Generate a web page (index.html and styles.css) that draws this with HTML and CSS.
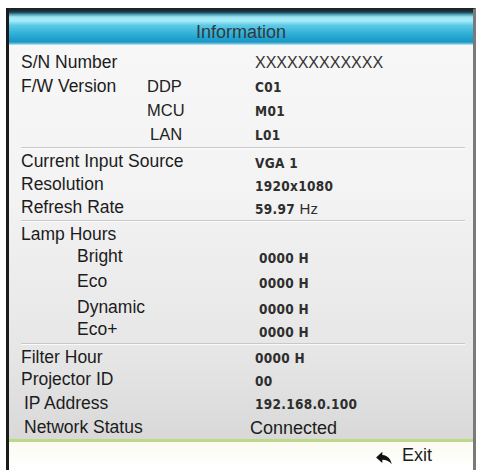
FILE: index.html
```html
<!DOCTYPE html>
<html>
<head>
<meta charset="utf-8">
<link rel="stylesheet" href="styles.css">
</head>
<body>
<div class="frame">
  <div class="header">Information</div>
  <div class="body">
    <div class="section s1">
      <div class="row"><span class="label">S/N Number</span><span class="sub"></span><span class="val thin">XXXXXXXXXXXX</span></div>
      <div class="row"><span class="label">F/W Version</span><span class="sub">DDP</span><span class="val">C01</span></div>
      <div class="row"><span class="label"></span><span class="sub">MCU</span><span class="val">M01</span></div>
      <div class="row"><span class="label"></span><span class="sub lan">LAN</span><span class="val">L01</span></div>
    </div>
    <div class="sep"></div>
    <div class="section s2">
      <div class="row r23"><span class="label wide">Current Input Source</span><span class="val">VGA 1</span></div>
      <div class="row r23"><span class="label wide">Resolution</span><span class="val">1920x1080</span></div>
      <div class="row r23"><span class="label wide">Refresh Rate</span><span class="val">59.97 <span class="unit">Hz</span></span></div>
    </div>
    <div class="sep"></div>
    <div class="section s3">
      <div class="row r22"><span class="label wide">Lamp Hours</span></div>
      <div class="row r22"><span class="label lamp">Bright</span><span class="val lv">0000 H</span></div>
      <div class="row r28"><span class="label lamp">Eco</span><span class="val lv">0000 H</span></div>
      <div class="row r24"><span class="label lamp">Dynamic</span><span class="val lv">0000 H</span></div>
      <div class="row r21"><span class="label lamp">Eco+</span><span class="val lv">0000 H</span></div>
    </div>
    <div class="sep"></div>
    <div class="section s4">
      <div class="row r22"><span class="label wide">Filter Hour</span><span class="val">0000 H</span></div>
      <div class="row r23"><span class="label wide">Projector ID</span><span class="val">00</span></div>
      <div class="row r24"><span class="label wide ind">IP Address</span><span class="val">192.168.0.100</span></div>
      <div class="row r24"><span class="label wide ind">Network Status</span><span class="conn">Connected</span></div>
    </div>
  </div>
  <div class="footer">
    <span class="exit">
      <svg class="exit-icon" viewBox="0 0 24 24" width="20" height="20"><path d="M10 8.5V4.5L2.5 11.5 10 18V14c5 0 8.8 1.8 11.2 5.6C20.4 14 17 9.2 10 8.5z" fill="#111"/></svg>
      <span class="exit-text">Exit</span>
    </span>
  </div>
</div>
</body>
</html>
```
FILE: styles.css
```css
html, body {
  margin: 0;
  padding: 0;
  background: #ffffff;
}
body {
  width: 481px;
  height: 470px;
  overflow: hidden;
  font-family: "Liberation Sans", Arial, sans-serif;
  color: #1c1c1c;
}
.frame {
  margin: 8px 0 0 6px;
  width: 464px;
  height: 461px;
  border-left: 3px solid #1a1a1a;
  border-right: 3px solid #7a7a7a;
  border-top: 1px solid #222;
  display: flex;
  flex-direction: column;
  background: linear-gradient(#f8f8f8 0%, #f3f3f3 40%, #e6e6e6 75%, #d8d8d8 94%);
}
.header {
  height: 24px;
  padding-top: 12px;
  line-height: 22px;
  text-align: center;
  font-size: 18px;
  color: #33393c;
  background: linear-gradient(#18222a 0px, #1e3a46 3px, #3d8ea6 5px, #9fe6f6 8px, #a6ecf8 12px, #62cbe6 16px, #3cb8dc 22px, #1e9fcc 30px, #1a98c6 33px, #7fc7e0 35px, #d8eef4 36px);
  flex: none;
}
.body {
  flex: none;
  padding-top: 5px;
}
.section {
  padding: 0 0 0 12px;
}
.row {
  display: flex;
  align-items: center;
  height: 24px;
}
.r21 { height: 21px; }
.r22 { height: 22px; }
.r23 { height: 23px; }
.r24 { height: 24px; }
.r28 { height: 28px; }
.label {
  width: 126px;
  font-size: 17.5px;
  white-space: nowrap;
  flex: none;
}
.label.wide {
  width: 234px;
}
.label.ind {
  padding-left: 3px;
  width: 231px;
}
.label.lamp {
  padding-left: 56px;
  width: 180px;
}
.sub {
  width: 108px;
  font-size: 16.5px;
  color: #222;
  flex: none;
}
.sub.lan {
  padding-left: 3px;
  width: 105px;
}
.val {
  font-family: "DejaVu Sans Condensed", "DejaVu Sans", sans-serif;
  font-stretch: condensed;
  font-size: 13.5px;
  font-weight: 700;
  letter-spacing: 0.3px;
  color: #2e2e2e;
  padding-top: 2px;
}
.val.thin {
  font-family: "Liberation Sans", Arial, sans-serif;
  font-stretch: normal;
  font-size: 16px;
  font-weight: 400;
  letter-spacing: 0;
  color: #333;
}
.val.lv {
  padding-left: 2px;
  padding-top: 4px;
}
.unit {
  font-family: "Liberation Sans", Arial, sans-serif;
  font-size: 15px;
  font-weight: 400;
}
.conn {
  font-size: 18px;
  margin-left: -5px;
  padding-top: 2px;
  color: #1c1c1c;
}
.sep {
  height: 1px;
  margin: 1px 8px 1px 12px;
  background: #c9c9c9;
  border-bottom: 1px solid #fbfbfb;
}
.s3 {
  padding-bottom: 2px;
}
.footer {
  flex: 1;
  border-top: 3px solid #bcd98a;
  background: linear-gradient(#fbfbf2, #ffffff);
  display: flex;
  justify-content: flex-end;
  align-items: flex-start;
}
.exit {
  display: flex;
  align-items: center;
  margin-right: 41px;
}
.exit-icon {
  margin-top: 6px;
  margin-right: 8px;
}
.exit-text {
  font-size: 18px;
  line-height: 20px;
  color: #1c1c1c;
}
```
